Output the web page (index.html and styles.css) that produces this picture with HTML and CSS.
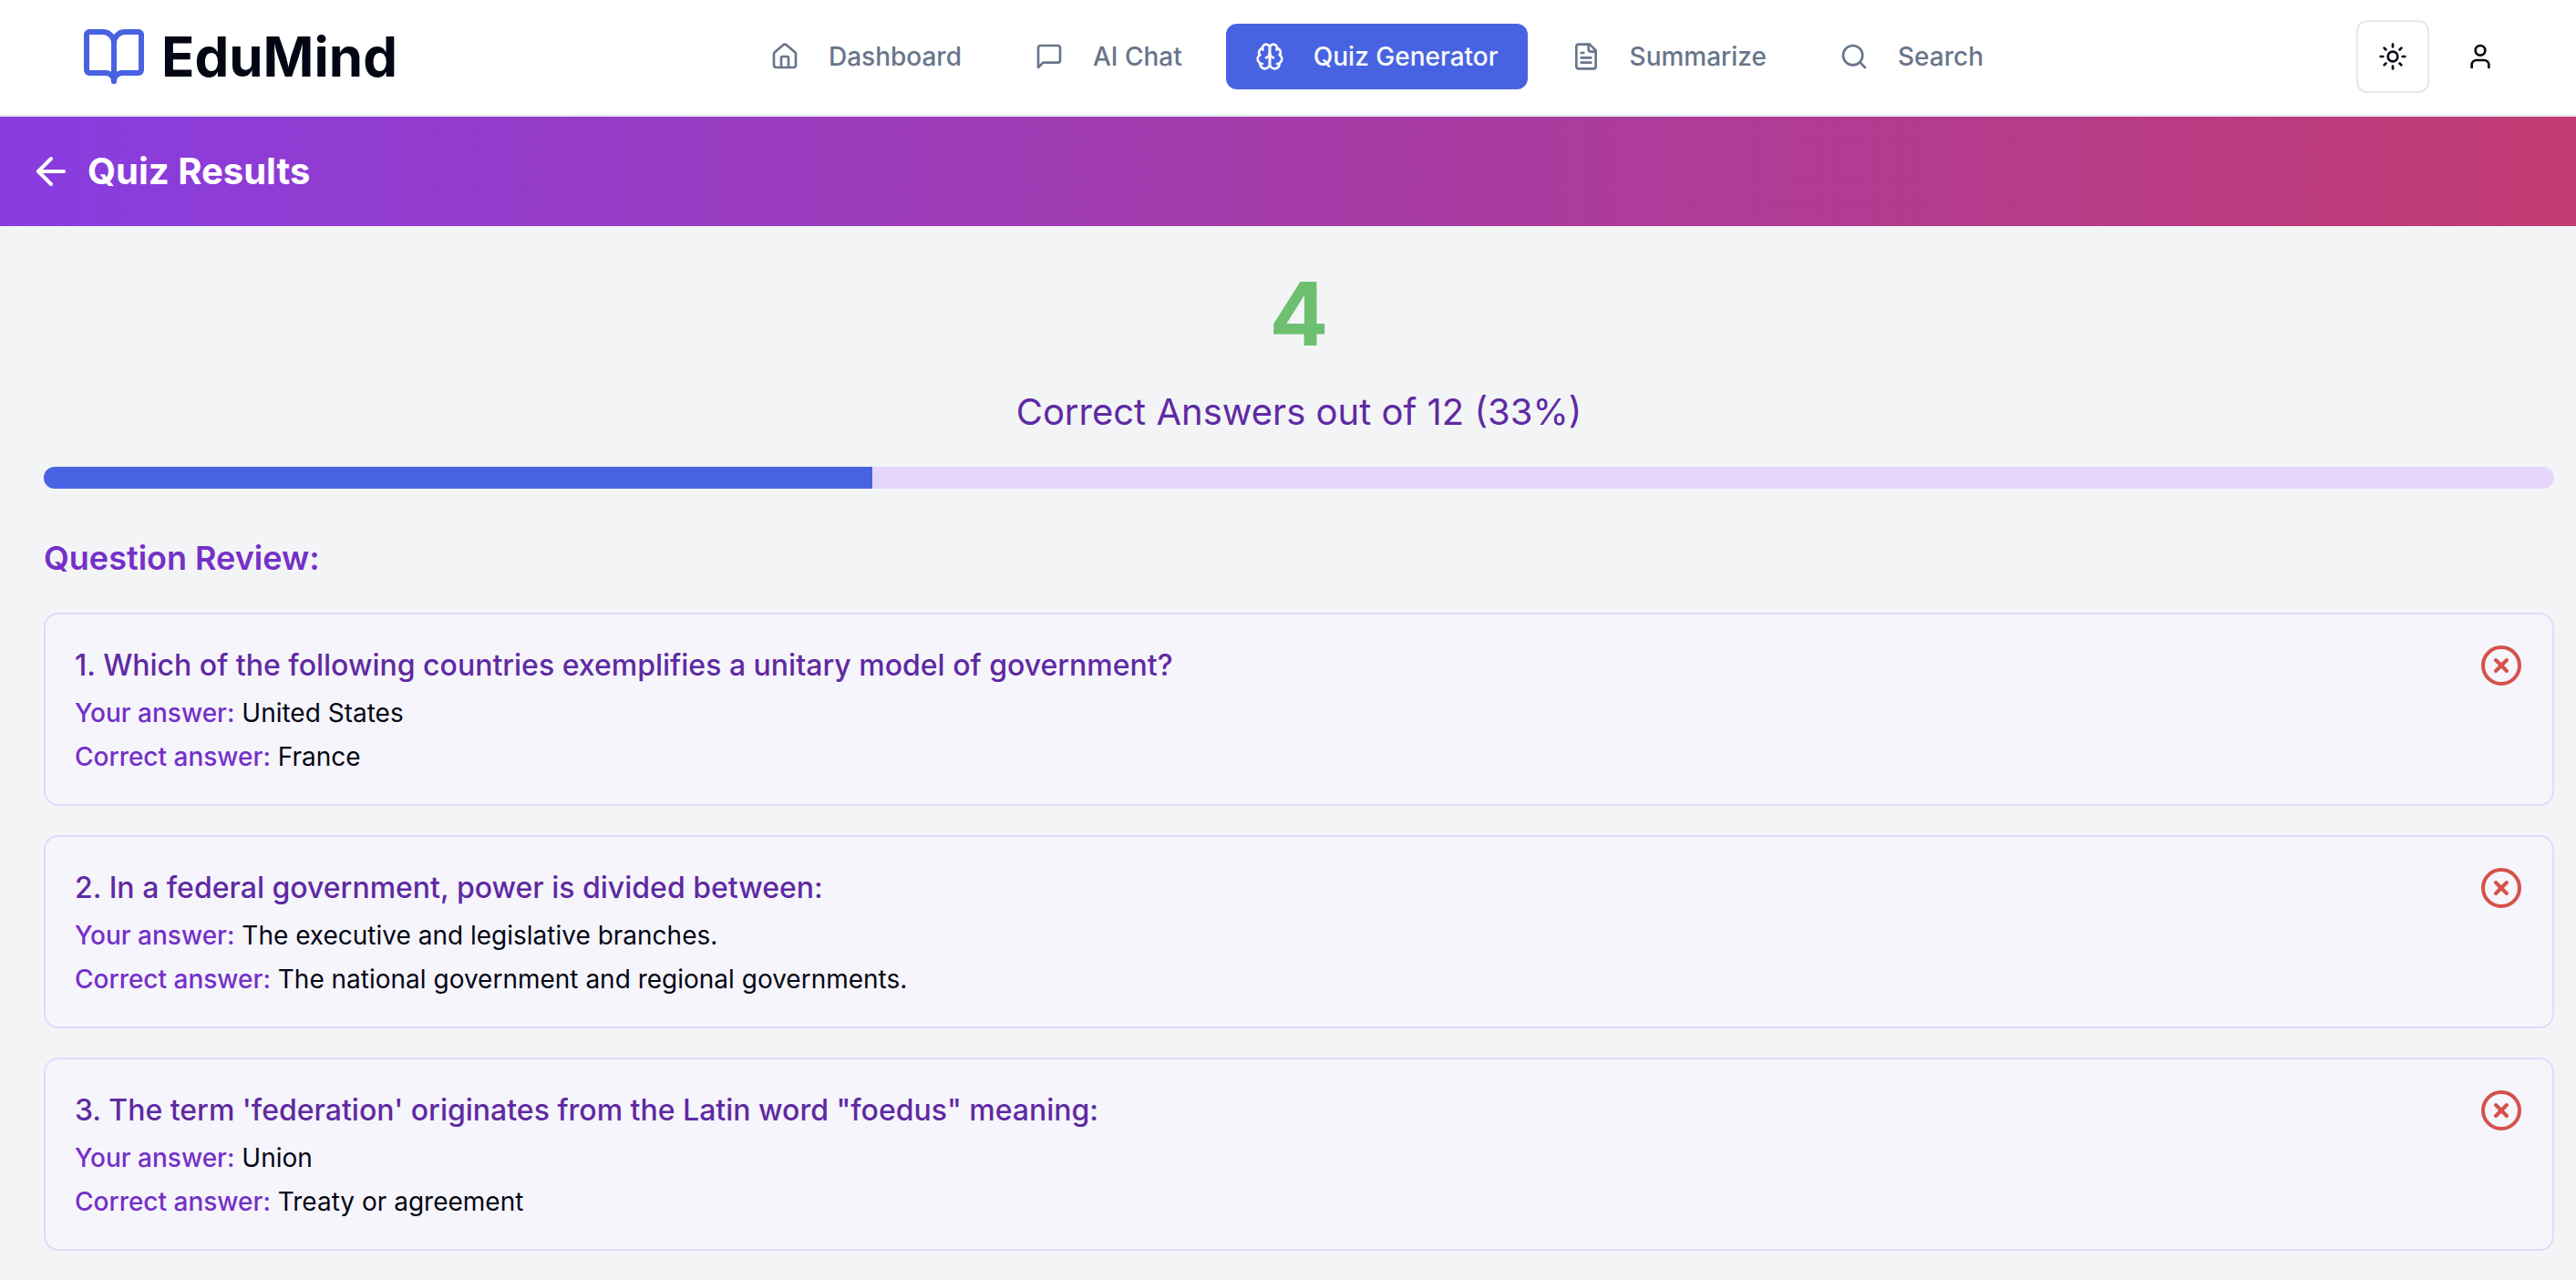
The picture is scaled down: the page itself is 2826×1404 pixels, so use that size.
FILE: index.html
```html
<!DOCTYPE html>
<html lang="en">
<head>
  <meta charset="utf-8">
  <meta name="viewport" content="width=device-width, initial-scale=1">
  <title>EduMind - Quiz Results</title>
  <link rel="stylesheet" href="styles.css">
</head>
<body>
  <header class="site-header">
    <a class="brand" href="#">
      <svg class="icon icon-brand" viewBox="0 0 24 24" aria-hidden="true"><path d="M12 7v14"/><path d="M3 18a1 1 0 0 1-1-1V4a1 1 0 0 1 1-1h5a4 4 0 0 1 4 4 4 4 0 0 1 4-4h5a1 1 0 0 1 1 1v13a1 1 0 0 1-1 1h-6a3 3 0 0 0-3 3 3 3 0 0 0-3-3z"/></svg>
      <span>EduMind</span>
    </a>
    <nav class="main-nav" aria-label="Main">
      <a class="nav-link" href="#">
        <svg class="icon" viewBox="0 0 24 24" aria-hidden="true"><path d="M15 21v-8a1 1 0 0 0-1-1h-4a1 1 0 0 0-1 1v8"/><path d="M3 10a2 2 0 0 1 .709-1.528l7-5.999a2 2 0 0 1 2.582 0l7 5.999A2 2 0 0 1 21 10v9a2 2 0 0 1-2 2H5a2 2 0 0 1-2-2z"/></svg>
        <span>Dashboard</span>
      </a>
      <a class="nav-link" href="#">
        <svg class="icon" viewBox="0 0 24 24" aria-hidden="true"><path d="M21 15a2 2 0 0 1-2 2H7l-4 4V5a2 2 0 0 1 2-2h14a2 2 0 0 1 2 2z"/></svg>
        <span>AI Chat</span>
      </a>
      <a class="nav-link nav-link-active" href="#" aria-current="page">
        <svg class="icon" viewBox="0 0 24 24" aria-hidden="true"><path d="M12 5a3 3 0 1 0-5.997.125 4 4 0 0 0-2.526 5.77 4 4 0 0 0 .556 6.588A4 4 0 1 0 12 18Z"/><path d="M12 5a3 3 0 1 1 5.997.125 4 4 0 0 1 2.526 5.77 4 4 0 0 1-.556 6.588A4 4 0 1 1 12 18Z"/><path d="M15 13a4.5 4.5 0 0 1-3-4 4.5 4.5 0 0 1-3 4"/><path d="M17.599 6.5a3 3 0 0 0 .399-1.375"/><path d="M6.003 5.125A3 3 0 0 0 6.401 6.5"/><path d="M3.477 10.896a4 4 0 0 1 .585-.396"/><path d="M19.938 10.5a4 4 0 0 1 .585.396"/><path d="M6 18a4 4 0 0 1-1.967-.516"/><path d="M19.967 17.484A4 4 0 0 1 18 18"/></svg>
        <span>Quiz Generator</span>
      </a>
      <a class="nav-link" href="#">
        <svg class="icon" viewBox="0 0 24 24" aria-hidden="true"><path d="M15 2H6a2 2 0 0 0-2 2v16a2 2 0 0 0 2 2h12a2 2 0 0 0 2-2V7Z"/><path d="M14 2v4a2 2 0 0 0 2 2h4"/><path d="M10 9H8"/><path d="M16 13H8"/><path d="M16 17H8"/></svg>
        <span>Summarize</span>
      </a>
      <a class="nav-link" href="#">
        <svg class="icon" viewBox="0 0 24 24" aria-hidden="true"><circle cx="11" cy="11" r="8"/><path d="m21 21-4.3-4.3"/></svg>
        <span>Search</span>
      </a>
    </nav>
    <div class="header-actions">
      <button class="icon-button icon-button-outline" type="button" aria-label="Toggle theme">
        <svg class="icon" viewBox="0 0 24 24" aria-hidden="true"><circle cx="12" cy="12" r="4"/><path d="M12 2v2"/><path d="M12 20v2"/><path d="m4.93 4.93 1.41 1.41"/><path d="m17.66 17.66 1.41 1.41"/><path d="M2 12h2"/><path d="M20 12h2"/><path d="m6.34 17.66-1.41 1.41"/><path d="m19.07 4.93-1.41 1.41"/></svg>
      </button>
      <button class="icon-button" type="button" aria-label="Account">
        <svg class="icon" viewBox="0 0 24 24" aria-hidden="true"><path d="M19 21v-2a4 4 0 0 0-4-4H9a4 4 0 0 0-4 4v2"/><circle cx="12" cy="7" r="4"/></svg>
      </button>
    </div>
  </header>

  <div class="banner">
    <button class="back-button" type="button" aria-label="Back">
      <svg class="icon icon-large" viewBox="0 0 24 24" aria-hidden="true"><path d="m12 19-7-7 7-7"/><path d="M19 12H5"/></svg>
    </button>
    <h1 class="banner-title">Quiz Results</h1>
  </div>

  <main class="results">
    <section class="score">
      <p class="score-value">4</p>
      <p class="score-label">Correct Answers out of 12 (33%)</p>
      <div class="progress" role="progressbar" aria-label="Score" aria-valuemin="0" aria-valuemax="100" aria-valuenow="33">
        <div class="progress-fill" style="width: 33%"></div>
      </div>
    </section>

    <section class="review">
      <h2 class="review-title">Question Review:</h2>
      <article class="question">
        <div>
          <h3 class="question-title">1. Which of the following countries exemplifies a unitary model of government?</h3>
          <p class="answer"><span class="answer-label">Your answer:</span> United States</p>
          <p class="answer"><span class="answer-label">Correct answer:</span> France</p>
        </div>
        <svg class="icon icon-large icon-wrong" viewBox="0 0 24 24" role="img" aria-label="Incorrect"><circle cx="12" cy="12" r="10"/><path d="m15 9-6 6"/><path d="m9 9 6 6"/></svg>
      </article>
      <article class="question">
        <div>
          <h3 class="question-title">2. In a federal government, power is divided between:</h3>
          <p class="answer"><span class="answer-label">Your answer:</span> The executive and legislative branches.</p>
          <p class="answer"><span class="answer-label">Correct answer:</span> The national government and regional governments.</p>
        </div>
        <svg class="icon icon-large icon-wrong" viewBox="0 0 24 24" role="img" aria-label="Incorrect"><circle cx="12" cy="12" r="10"/><path d="m15 9-6 6"/><path d="m9 9 6 6"/></svg>
      </article>
      <article class="question">
        <div>
          <h3 class="question-title">3. The term 'federation' originates from the Latin word "foedus" meaning:</h3>
          <p class="answer"><span class="answer-label">Your answer:</span> Union</p>
          <p class="answer"><span class="answer-label">Correct answer:</span> Treaty or agreement</p>
        </div>
        <svg class="icon icon-large icon-wrong" viewBox="0 0 24 24" role="img" aria-label="Incorrect"><circle cx="12" cy="12" r="10"/><path d="m15 9-6 6"/><path d="m9 9 6 6"/></svg>
      </article>
    </section>
  </main>
</body>
</html>
```
FILE: styles.css
```css
:root {
  --primary: #4863e2;
  --foreground: #030714;
  --muted: #68758b;
  --border: #e3e8f0;
  --page: #f3f4f6;
  --purple-50: #f6f5fc;
  --purple-200: #e5d7fa;
  --purple-700: #7530c8;
  --purple-800: #5f2aa3;
  --red: #d4524b;
  --green: #6cc070;
}

* {
  box-sizing: border-box;
}

body {
  margin: 0;
  background: var(--page);
  color: var(--foreground);
  font-family: Inter, "Liberation Sans", sans-serif;
  font-size: 28px;
  line-height: 40px;
}

h1,
h2,
h3,
p {
  margin: 0;
}

a {
  color: inherit;
  text-decoration: none;
}

button {
  display: flex;
  align-items: center;
  justify-content: center;
  padding: 0;
  border: 0;
  background: none;
  color: inherit;
  font: inherit;
  cursor: pointer;
}

.icon {
  flex: none;
  width: 32px;
  height: 32px;
  fill: none;
  stroke: currentColor;
  stroke-width: 2;
  stroke-linecap: round;
  stroke-linejoin: round;
}

.icon-large {
  width: 48px;
  height: 48px;
}

.icon-brand {
  width: 72px;
  height: 72px;
  color: var(--primary);
}

.icon-wrong {
  color: var(--red);
}

/* Header */
.site-header {
  display: flex;
  align-items: center;
  justify-content: space-between;
  padding: 22px 65px 24px 89px;
  border-bottom: 2px solid var(--border);
  background: #fff;
}

.brand {
  display: flex;
  align-items: center;
  gap: 16px;
  font-size: 60px;
  font-weight: 700;
  line-height: 72px;
}

.main-nav {
  display: flex;
  gap: 16px;
}

.nav-link {
  display: flex;
  align-items: center;
  gap: 32px;
  padding: 16px 32px;
  border-radius: 12px;
  color: var(--muted);
  font-weight: 500;
  white-space: nowrap;
}

.nav-link-active {
  background: var(--primary);
  color: #f8fafc;
}

.header-actions {
  display: flex;
  gap: 16px;
}

.icon-button {
  width: 80px;
  height: 80px;
  border-radius: 12px;
}

.icon-button-outline {
  border: 2px solid var(--border);
  background: #fff;
}

/* Banner */
.banner {
  display: flex;
  align-items: center;
  gap: 16px;
  padding: 32px;
  background: linear-gradient(to right, #883ce0, #c23b72);
  color: #fff;
}

.banner-title {
  font-size: 40px;
  font-weight: 700;
  line-height: 56px;
}

/* Results */
.results {
  display: flex;
  flex-direction: column;
  gap: 48px;
  padding: 48px 24px 32px 48px;
}

.score,
.review {
  display: flex;
  flex-direction: column;
  gap: 32px;
}

.score {
  text-align: center;
}

.score-value {
  color: var(--green);
  font-size: 96px;
  font-weight: 700;
  line-height: 96px;
}

.score-label {
  color: var(--purple-800);
  font-size: 40px;
  line-height: 56px;
}

.progress {
  height: 24px;
  overflow: hidden;
  border-radius: 12px;
  background: var(--purple-200);
}

.progress-fill {
  height: 100%;
  background: var(--primary);
}

.review-title {
  color: var(--purple-700);
  font-size: 36px;
  font-weight: 600;
  line-height: 56px;
}

.question {
  display: flex;
  align-items: flex-start;
  justify-content: space-between;
  padding: 32px;
  border: 2px solid var(--purple-200);
  border-radius: 16px;
  background: var(--purple-50);
}

.question-title {
  color: var(--purple-800);
  font-size: 32px;
  font-weight: 500;
  line-height: 48px;
}

.answer {
  margin-top: 8px;
}

.answer-label {
  color: var(--purple-700);
  font-weight: 500;
}
```
